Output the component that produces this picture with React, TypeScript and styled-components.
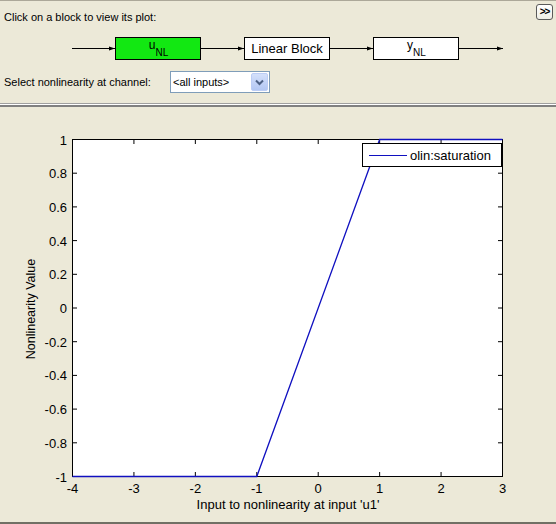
import React from "react";
import styled, { createGlobalStyle } from "styled-components";

const GlobalStyle = createGlobalStyle`
  html, body { margin: 0; padding: 0; background: #ECE9D8; }
  body { font-family: "Liberation Sans", Arial, sans-serif; color: #000; }
  * { box-sizing: border-box; }
`;

const Window = styled.div`
  width: 556px;
  height: 524px;
  background: #ece9d8;
  border-top: 1px solid #aca899;
  border-bottom: 2px solid #716f64;
  display: flex;
  flex-direction: column;
  overflow: hidden;
`;

const Header = styled.div`
  height: 102px;
  flex: none;
  display: flex;
  flex-direction: column;
  padding: 3px 3px 0 4px;
`;

const TopRow = styled.div`
  display: flex;
  justify-content: space-between;
  align-items: flex-start;
  height: 17px;
`;

const Hint = styled.span`
  font-size: 11px;
  line-height: 13px;
  margin-top: 7px;
`;

const ToggleButton = styled.button`
  width: 17px;
  height: 16px;
  padding: 0;
  margin: 0;
  border: 1px solid #5a5a5a;
  border-radius: 3px;
  background: linear-gradient(#ffffff, #eeeee6);
  font-family: "Liberation Sans", Arial, sans-serif;
  font-size: 10px;
  font-weight: bold;
  letter-spacing: -1px;
  line-height: 14px;
  color: #000;
  display: flex;
  align-items: center;
  justify-content: center;
`;

const Diagram = styled.div`
  margin-top: 16px;
  padding-left: 68px;
  height: 23px;
  display: flex;
  align-items: center;
`;

const Block = styled.div<{ $fill: string }>`
  width: 86px;
  height: 23px;
  flex: none;
  border: 1px solid #000;
  background: ${(p) => p.$fill};
  display: flex;
  align-items: center;
  justify-content: center;
  font-size: 13px;
  line-height: 15px;
`;

const SignalName = styled.span`
  font-size: 12px;
  line-height: 12px;
  margin-top: -6px;
  padding-left: 1px;
`;

const Sub = styled.span`
  font-size: 10px;
  position: relative;
  top: 7px;
`;

const SelectRow = styled.div`
  margin-top: 11px;
  height: 22px;
  display: flex;
  align-items: center;
`;

const SelectLabel = styled.span`
  width: 166px;
  flex: none;
  font-size: 11px;
  line-height: 13px;
`;

const Combo = styled.div`
  width: 100px;
  height: 22px;
  border: 1px solid #7f9db9;
  background: #fff;
  display: flex;
  align-items: center;
`;

const ComboText = styled.span`
  flex: 1;
  padding-left: 2px;
  font-size: 11px;
  line-height: 13px;
`;

const ComboButton = styled.div`
  width: 17px;
  height: 18px;
  margin: 1px;
  border: 1px solid #bccdf5;
  border-radius: 2px;
  background: linear-gradient(#d4e0fb, #b3c7f3);
  display: flex;
  align-items: center;
  justify-content: center;
`;

const Separator = styled.div`
  height: 4px;
  flex: none;
  border-top: 1px solid #a0a0a0;
  border-bottom: 2px solid #808080;
  background: #ffffff;
`;

const PlotArea = styled.div`
  flex: 1;
  min-height: 0;
`;

const PlotSvg = styled.svg`
  display: block;
`;

const TickText = styled.text`
  font-family: "Liberation Sans", Arial, sans-serif;
  font-size: 13px;
  fill: #000;
`;

const AxisLabel = styled.text<{ $size: number }>`
  font-family: "Liberation Sans", Arial, sans-serif;
  font-size: ${(p) => p.$size}px;
  fill: #000;
`;

const LegendText = styled.text`
  font-family: "Liberation Sans", Arial, sans-serif;
  font-size: 13px;
  fill: #000;
`;

function Connector({ width, arrow = true }: { width: number; arrow?: boolean }) {
  return (
    <svg width={width} height={23} style={{ flex: "none", display: "block" }}>
      <line x1={0} y1={11.5} x2={width} y2={11.5} stroke="#000" strokeWidth={1} />
      {arrow && (
        <polygon
          points={`${width - 6},9.5 ${width},11.5 ${width - 6},13.5`}
          fill="#000"
        />
      )}
    </svg>
  );
}

function Chevron() {
  return (
    <svg width={9} height={7} viewBox="0 0 9 7">
      <path d="M1 1.5 L4.5 5 L8 1.5" fill="none" stroke="#4d6185" strokeWidth={2} />
    </svg>
  );
}

const X = (v: number) => 72.5 + (v + 4) * (430 / 7);
const Y = (v: number) => 139.5 + (1 - v) * 168.5;
const LINE = "#1010c0";

function Plot() {
  const xTicks = [-4, -3, -2, -1, 0, 1, 2, 3];
  const yTicks = [1, 0.8, 0.6, 0.4, 0.2, 0, -0.2, -0.4, -0.6, -0.8, -1];
  const L = 4.5;
  const left = X(-4);
  const right = X(3);
  const top = Y(1);
  const bottom = Y(-1);
  const fmt = (v: number) => String(Number(v.toFixed(1)));
  const data = [
    [-4, -1],
    [-1, -1],
    [1, 1],
    [3, 1],
  ];
  const pts = data.map(([a, b]) => `${X(a)},${Y(b)}`).join(" ");
  return (
    <PlotSvg width={556} height={415} viewBox="0 107 556 415">
      <rect x={left} y={top} width={right - left} height={bottom - top} fill="#fff" />
      {xTicks.map((t) => (
        <g key={"xt" + t}>
          <line x1={X(t)} y1={bottom} x2={X(t)} y2={bottom - L} stroke="#000" />
          <line x1={X(t)} y1={top} x2={X(t)} y2={top + L} stroke="#000" />
          <TickText x={X(t)} y={493} textAnchor="middle">
            {fmt(t)}
          </TickText>
        </g>
      ))}
      {yTicks.map((t) => (
        <g key={"yt" + t}>
          <line x1={left} y1={Y(t)} x2={left + L} y2={Y(t)} stroke="#000" />
          <line x1={right} y1={Y(t)} x2={right - L} y2={Y(t)} stroke="#000" />
          <TickText x={67} y={Y(t) + 5} textAnchor="end">
            {fmt(t)}
          </TickText>
        </g>
      ))}
      <rect
        x={left}
        y={top}
        width={right - left}
        height={bottom - top}
        fill="none"
        stroke="#000"
        strokeWidth={1}
      />
      <polyline points={pts} fill="none" stroke={LINE} strokeWidth={1.3} />
      <rect x={362.5} y={143.5} width={139} height={23} fill="#fff" stroke="#000" />
      <line x1={369} y1={155.5} x2={407} y2={155.5} stroke={LINE} strokeWidth={1.2} />
      <LegendText x={410} y={160}>
        olin:saturation
      </LegendText>
      <AxisLabel $size={13} x={288} y={508.5} textAnchor="middle">
        Input to nonlinearity at input 'u1'
      </AxisLabel>
      <AxisLabel
        $size={12.5}
        x={0}
        y={0}
        textAnchor="middle"
        transform={`translate(35 309) rotate(-90)`}
      >
        Nonlinearity Value
      </AxisLabel>
    </PlotSvg>
  );
}

export default function App() {
  return (
    <>
      <GlobalStyle />
      <Window>
        <Header>
          <TopRow>
            <Hint>Click on a block to view its plot:</Hint>
            <ToggleButton>&gt;&gt;</ToggleButton>
          </TopRow>
          <Diagram>
            <Connector width={43} />
            <Block $fill="#12e812">
              <SignalName>
                u<Sub>NL</Sub>
              </SignalName>
            </Block>
            <Connector width={43} />
            <Block $fill="#ffffff">Linear Block</Block>
            <Connector width={43} />
            <Block $fill="#ffffff">
              <SignalName>
                y<Sub>NL</Sub>
              </SignalName>
            </Block>
            <Connector width={44} />
          </Diagram>
          <SelectRow>
            <SelectLabel>Select nonlinearity at channel:</SelectLabel>
            <Combo>
              <ComboText>&lt;all inputs&gt;</ComboText>
              <ComboButton>
                <Chevron />
              </ComboButton>
            </Combo>
          </SelectRow>
        </Header>
        <Separator />
        <PlotArea>
          <Plot />
        </PlotArea>
      </Window>
    </>
  );
}
